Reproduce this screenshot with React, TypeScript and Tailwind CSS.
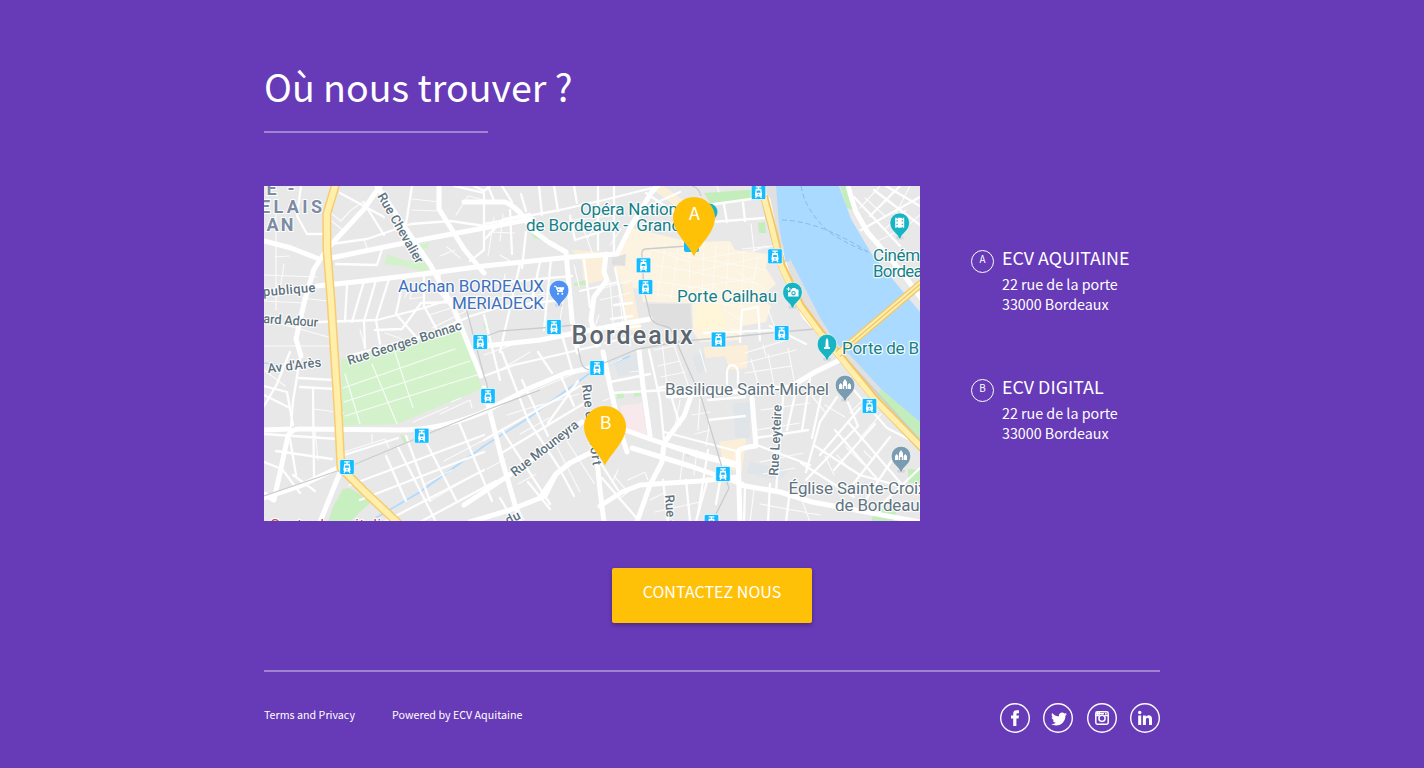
import React from "react";
import { FaTwitter } from "react-icons/fa";

const majorRoads = [
  "M380 186L364 209L327 249L314 269L304 303L296 339L301 356",
  "M264 241L291 248L319 259",
  "M331 258L404 243L484 228L532 219",
  "M317 286L364 281L431 273L484 266L571 257L617 254L631 226L651 193L657 186",
  "M377 186L431 266L454 309L481 376",
  "M439 186V209L464 249L484 273",
  "M264 494L274 500L288 436Q291 429 300 429L400 430Q440 430 484 412L530 388L566 373L596 367",
  "M264 498L300 486L344 465",
  "M341 470L320 522",
  "M264 430L290 429",
  "M464 202L505 202Q520 208 532 230L550 243L566 252L572 320L578 352",
  "M484 388L502 460L520 522",
  "M464 505L520 468L582 422",
  "M540 498L556 474L570 463L606 445",
  "M625 430L650 439L700 456L736 465",
  "M740 485L780 492L812 502L920 522",
  "M603 352L610 386L620 430L627 452",
  "M470 522L510 510L545 496L556 474L570 463",
  "M597 460L600 490L604 522",
  "M600 506L622 492L640 485L700 481L738 477",
  "M740 522L738 452Q738 448 756 446L752 398",
  "M668 396L720 393L790 387L815 372L840 360",
  "M637 522L650 485L662 462L664 443L684 416L691 396",
  "M606 254L604 272L607 280L594 297L591 320L597 345",
  "M484 346L540 340L591 330L650 319",
  "M639 350L643 386L650 436",
  "M762 192L768 200L776 238L790 282L804 316L830 346",
  "M632 448L690 466L742 484",
];

const mediumRoads = [
  "M301 186L297 216L307 234L324 234",
  "M331 244L367 239L411 224L451 221L484 226",
  "M336 264L377 265L383 246",
  "M319 322L377 320L424 308L451 299",
  "M347 356L424 336L471 316L500 307L560 300",
  "M474 186L484 191L490 186",
  "M454 186L484 193L484 250L470 261",
  "M412 186L406 224",
  "M340 193L384 217",
  "M364 203L384 235",
  "M347 285L345 321",
  "M364 281L352 322",
  "M376 280L364 321L365 348",
  "M389 279L376 320L380 344",
  "M404 277L396 314L418 339",
  "M424 274L424 306L436 328",
  "M440 272L438 290L454 310",
  "M375 330L402 329L421 303L454 302",
  "M264 386L287 392L293 425",
  "M301 352L293 401L291 427",
  "M290 352L276 386L264 406",
  "M299 378L334 380M300 387L336 389",
  "M264 395L290 408M264 434L338 439M276 451L332 459M290 439L296 475M313 388L314 477",
  "M264 462L282 469L300 493M293 475L315 491",
  "M344 455L398 438M386 456L406 501M406 436L430 501M398 447L436 522M425 440L456 500M458 420L492 501",
  "M350 485L484 435M360 500L484 452M384 522L484 470M420 522L496 481",
  "M502 352L528 420L558 466L574 496",
  "M484 376L514 365L600 345",
  "M538 352L552 373M522 380L548 436M560 374L574 406",
  "M484 440L580 386M500 454L588 401M520 466L578 426M548 423L578 381",
  "M502 430L550 504M528 482L550 509M500 498L514 522",
  "M484 240L504 219L530 214M510 210L512 254M526 232L522 268",
  "M484 284L572 276M540 262L532 300M551 259L544 330M520 264L500 352M484 315L500 380",
  "M560 328L572 370M584 260L590 307M580 291L618 282",
  "M598 250L598 186M614 253L614 186M570 216L575 240L606 230",
  "M632 228L652 190M636 212L680 192M646 193L674 212",
  "M484 224L560 210L604 200L660 186",
  "M488 186L495 203M502 186L512 202M521 194L526 211M539 186L542 215M554 186L558 211M574 186L577 203",
  "M614 305L632 303M611 319L632 316M609 330L640 326M605 343L638 335",
  "M615 268L622 300L630 345",
  "M610 382L650 374M611 393L668 390",
  "M649 350L660 400L664 440M658 388L668 386L680 425",
  "M708 400L745 397M708 420L745 416M756 438L808 430M754 444L810 465",
  "M708 450L698 514M724 458L716 504M745 487L744 522M770 484L768 522M790 490L786 522",
  "M784 386L776 492M798 382L787 430M810 379L802 431M822 392L812 438M837 397L820 422L806 472",
  "M840 384L858 426L806 480M852 388L887 428L920 445",
  "M848 422L910 494M835 430L878 480M815 446L860 475L920 492M801 463L854 497",
  "M860 408L820 455M875 424L834 470M890 437L850 488M898 451L867 498M920 468L880 506",
  "M727 384V372Q728 365 732 365Q737 365 738 372V386",
  "M740 342L742 310L758 307L760 340M704 333L780 330M770 326L806 344",
  "M708 205L758 198M711 222L764 218M724 205L727 222M743 203L745 221",
  "M854 197L900 246M861 230L920 197M874 190L920 225M886 186L920 206M900 186L870 216",
  "M663 480L668 522M686 480L690 521M708 478L696 521",
  "M602 478L640 522M600 462L618 490",
  "M662 442L735 462M664 432L740 452",
];

const quayRoad = "M848 186L852 200L856 212L868 233L890 258L903 274L924 302";

const smallRoads = [
  "M276 202L276 310M284 264L280 290M275 257L289 256M264 275L317 277M264 301L306 303M265 346L332 346M274 322L332 338M302 298L328 301",
  "M328 211L341 221L350 211L364 201M328 218L345 232M347 226L368 207M364 240L368 250",
  "M440 256L455 250M447 247L460 258M412 210L438 211M412 199L440 202M456 215L468 196L484 200",
  "M360 330L365 348M385 333L402 339M405 297L410 287M412 290L410 299L424 297M429 315L455 307M432 328L468 310",
  "M343 388L455 349M345 416L480 374M344 402L470 361M395 352L413 408M372 364L397 424M345 374L360 424",
  "M314 409L344 413M315 430L318 460M372 434L372 442M344 452L385 439L389 448M413 422L448 407M440 414L470 400L472 408M451 402L461 398M264 370L285 386",
  "M444 461L484 440M425 484L452 470M430 501L460 483",
  "M500 370L530 352M484 355L520 342M526 394L578 372M535 407L579 394",
  "M507 415L543 404M520 434L549 418M487 469L505 459M508 487L524 520M557 447L580 492M567 441L594 483M518 484L536 474",
  "M489 232L515 233M488 256L494 217M503 214L500 241M500 255L515 264M484 299L570 292M505 274L502 304M565 290L560 320",
  "M574 265L579 286M582 225L593 255M572 220L610 216M602 210L588 238M621 229L610 245",
  "M604 288L632 280M610 281L614 336M617 274L623 326M600 300L630 293",
  "M599 315L590 340M595 371L622 359M603 401L615 396M630 372L640 371",
  "M614 476L628 492L619 499M628 480L645 472L648 480M618 470L612 483M650 500L664 493M655 512L700 502",
  "M680 400L675 426M700 398L698 430M692 415L710 412M695 434L710 430M697 450L694 475M710 420L706 446M684 450L680 480",
  "M757 430L800 423M761 410L810 403M760 462L803 453M763 474L795 468M754 490L750 522M760 504L820 515M799 492L810 522",
  "M812 396L825 412M845 417L825 405M865 398L850 413M881 414L860 438M825 456L834 475M837 455L850 470M846 447L863 464M864 451L873 460",
  "M763 345L766 356M745 353L790 339M740 364L796 350M745 373L792 366M751 359L760 390M768 354L775 390M788 348L794 380M768 310L776 330",
  "M880 186L860 208M865 198L885 216M885 229L906 210M878 241L900 230M910 186L896 213M920 215L900 232",
  "M717 186L719 192M751 224L754 250M765 246L752 252M742 249L773 246",
  "M654 350L674 346M658 366L680 361M661 377L685 372M662 342L667 386M672 340L690 390M700 350L706 372",
];

const oldTown = [
  "M653 242L645 270M666 242L657 297M679 244L671 299M690 240L689 300M704 240L702 300M716 245L712 300M729 244L725 313M744 251L741 307M758 257L750 300",
  "M650 250L765 270M655 265L760 284M645 280L756 296M650 293L744 307M728 312L745 322M730 328L744 334",
  "M698 271L762 257M688 288L755 278M705 258L770 247M668 255L690 262M735 270L765 290M712 286L738 300",
];

const trams: [number, number][] = [
  [758.5, 192], [775, 256.3], [643.5, 265.3], [645.5, 287], [554, 327], [480.3, 342], [597, 368], [718.5, 339.5],
  [781.7, 333], [869.5, 406], [488, 396], [421.7, 435.7], [347, 467], [723, 474], [711.5, 522],
];

function Tram({ x, y }: { x: number; y: number }) {
  return (
    <g transform={`translate(${x} ${y})`}>
      <rect x="-7.3" y="-7.5" width="14.6" height="15" rx="1.5" fill="#14bcff" stroke="#fff" strokeWidth=".7" />
      <path d="M-2.8 -5.2H2.8M0 -5V-2.8M-3 5.8L-1.8 3.8M3 5.8L1.8 3.8" stroke="#fff" strokeWidth="1.3" fill="none" />
      <path fillRule="evenodd" d="M-2.8 -3.2H2.8L3.6 3Q3.5 4.4 2 4.4H-2Q-3.5 4.4 -3.6 3ZM-1.7 -1.4L-2 .8H2L1.7 -1.4ZM-.8 2.3V3.3H.8V2.3Z" fill="#fff" />
    </g>
  );
}

function Pin({ x, y, color, children }: { x: number; y: number; color: string; children: React.ReactNode }) {
  return (
    <g transform={`translate(${x} ${y})`}>
      <ellipse cx="0" cy="15" rx="4" ry="2" fill="#000" opacity=".08" />
      <path d="M-1.2 16C-1.2 10.5 -9.8 9 -9.8 0A9.8 9.8 0 0 1 9.8 0C9.8 9 1.2 10.5 1.2 16Z" fill={color} stroke="#fff" strokeWidth=".6" />
      {children}
    </g>
  );
}

function Church() {
  return <path d="M-6 4V0L-4.3 -2L-2.6 0V4ZM-2 4V-3L0 -6L2 -3V4H.8V1H-.8V4ZM2.6 4V0L4.3 -2L6 0V4Z" fill="#fff" />;
}

type LabelProps = { x: number; y: number; w: number; children: string; color?: string; size?: number; bold?: boolean; rotate?: number };

function Label({ x, y, w, children, color = "#5f7380", size = 17, bold, rotate = 0 }: LabelProps) {
  return (
    <text
      x="0"
      y="0"
      transform={`translate(${x} ${y}) rotate(${rotate})`}
      textLength={w}
      fontSize={size}
      fontWeight={bold ? 500 : 400}
      fill={color}
      stroke="#fff"
      strokeOpacity=".85"
      strokeWidth="2.4"
      strokeLinejoin="round"
      paintOrder="stroke"
      xmlSpace="preserve"
    >
      {children}
    </text>
  );
}

function District({ x, y, w, children }: { x: number; y: number; w: number; children: string }) {
  return (
    <text x={x} y={y} fontSize="18" fontWeight="700" fill="#7d8ca5" stroke="#fff" strokeWidth="2" paintOrder="stroke" textLength={w}>
      {children}
    </text>
  );
}

function BigMarker({ x, y, letter }: { x: number; y: number; letter: string }) {
  return (
    <g transform={`translate(${x} ${y})`}>
      <path d="M0 59.5C-5 48 -21 36 -21 20.5A21 20.5 0 0 1 21 20.5C21 36 5 48 0 59.5Z" fill="#ffc107" />
      <text x="0.5" y="23" textAnchor="middle" fontSize="17.86" fill="#fff" className="font-['Noto_Sans_CJK_SC',sans-serif]">
        {letter}
      </text>
    </g>
  );
}

function CityMap() {
  const teal = "#158188";
  return (
    <svg viewBox="264 186 656 335" className="block h-[335px] w-[656px] shrink-0 overflow-hidden font-[Roboto,sans-serif]" role="img">
      <rect x="264" y="186" width="656" height="335" fill="#e8e8e8" />
      <path d="M622 240L632 228L690 242L730 241L735 250L768 254L766 268L776 284L760 298L771 306L766 322L742 326L740 340L700 342L693 332L692 303L643 302L641 290L621 284L615 266Z" fill="#fcf3e0" />
      <path d="M572 250L604 252L603 272L605 280L584 284L582 262ZM622 285L632 283L641 330L628 332ZM704 347L748 345L747 368L730 370L725 356L705 358ZM719 442L746 438L742 472L726 468L722 458ZM652 189L664 186L690 205L684 212Z" fill="#fbefd9" />
      <path d="M697 306L716 300L726 322L722 330L694 328Z" fill="#fff6d8" />
      <path d="M646 304L690 304L692 330L672 332L655 322ZM612 258L626 254L625 266L612 265Z" fill="#dfdfdf" />
      <path d="M341 359L424 340L463 329L482 389L397 424L343 426Z" fill="#d3f2cb" />
      <path d="M387 254L406 261L418 260L432 266L424 272L401 266L384 264ZM415 245L429 243L428 248L417 250Z" fill="#d3f2cb" />
      <path d="M343 489L350 488L371 502L360 512L350 522H328L333 507ZM530 231L540 234L552 240L544 241L534 238ZM400 434L410 440L404 443ZM574 283L586 280L586 285L574 286ZM484 318L488 326L484 329ZM600 325L618 324L619 329L601 331ZM617 394L624 392L624 398L617 399ZM634 391L641 390L641 396L634 397ZM688 450L691 450L689 457L686 456Z" fill="#c7efc0" />
      <path d="M704 193L762 189L762 199L710 203ZM769 198L776 212L783 238L776 235L768 214ZM758 223L765 222L766 233L759 233ZM840 186H847L853 210L847 208ZM908 469L920 470V485L908 482ZM874 512L897 505L894 522H871Z" fill="#c3edbb" />
      <path d="M620 406L642 403L647 438L625 430Z" fill="#f8eaec" />
      <path d="M614 362L636 352L640 372L618 377ZM733 404L750 402L750 438L735 438ZM750 462L790 470L780 480L746 473ZM692 356L704 353L706 370L698 374Z" fill="#dfe5e9" />
      <path d="M760 186H776L784 240L804 284L819 316L840 343L860 365L920 422V446L880 404L840 360L804 322L785 276Z" fill="#e0e0e0" />
      <path d="M881 389L920 422V447L874 402Z" fill="#c3edbb" />
      <path d="M264 363L280 365M374 519L420 492L484 446L530 417L590 373L630 356" stroke="#aedaff" strokeWidth="1.6" fill="none" />

      <g fill="none" stroke="#fff" strokeLinecap="round" strokeLinejoin="round">
        {smallRoads.map((d) => <path key={d} d={d} strokeWidth="1.2" opacity=".8" />)}
        {oldTown.map((d) => <path key={d} d={d} strokeWidth="1" opacity=".55" />)}
        {mediumRoads.map((d) => <path key={d} d={d} strokeWidth="2.3" opacity=".95" />)}
        {majorRoads.map((d) => <path key={d} d={d} strokeWidth="5" />)}
      </g>

      <path d="M776 186L779 225L782 243L804 286L819 316L836 343L850 355L881 389L920 422V312L890 276L871 253L851 219L839 186Z" fill="#aadaff" />
      <path d="M783 242L785 262L790 261L786 240Z" fill="#aadaff" />
      <path d={quayRoad} fill="none" stroke="#fff" strokeWidth="5" />
      <path d="M801 186Q805 210 828 231Q846 244 868 252M782 220Q820 221 868 252" fill="none" stroke="#8ab8ea" strokeWidth="1" strokeDasharray="5 3" />

      <g fill="none" stroke="#c9cccf" strokeWidth="1.3">
        <path d="M264 496L346 468L420 437L484 411L540 390" />
        <path d="M484 337L500 331L554 327L575 325M597 366L638 349L684 341L720 338L782 332L815 329" />
        <path d="M688 246L645 249Q641 250 642 256L644 290L650 316Q652 324 664 326Q672 327 674 336L702 400L724 474L729 488L712 522" />
        <path d="M578 348L581 362Q583 369 590 370M464 300L484 376Q490 388 486 404M692 186Q699 188 701 196" />
        <path d="M764 210L779 265L800 307L840 352L920 440" />
      </g>

      <g fill="none" strokeLinejoin="round">
        <path d="M335.7 184L326.8 214L327 250L331 300L334.5 355L338 409L341 468L364 491L399 524" stroke="#f7cc72" strokeWidth="9" />
        <path d="M335.7 184L326.8 214L327 250L331 300L334.5 355L338 409L341 468L364 491L399 524" stroke="#ffefaa" strokeWidth="6" />
        <path d="M764 196L772 226L782 266L801 306L821 333L841 357L877 401L923 449" stroke="#f4c667" strokeWidth="8" />
        <path d="M763.5 196L771.5 226L781 266L800 306L820 333L840 357L876 401L922 448" stroke="#ffefaa" strokeWidth="5.4" />
        <path d="M838 354L924 281" stroke="#f2c96c" strokeWidth="8" />
        <path d="M838 354L924 281" stroke="#ffefaa" strokeWidth="5.2" />
        <path d="M843 350L924 281" stroke="#ecc66d" strokeWidth="1.3" />
      </g>

      {trams.map(([x, y]) => <Tram key={`${x}-${y}`} x={x} y={y} />)}
      <rect x="684" y="237" width="15" height="15" rx="2" fill="#14bcff" />
      <circle cx="709" cy="212" r="8.5" fill="#18b4c4" />

      <District x={266.5} y={195} w={28}>E -</District>
      <District x={260} y={213} w={62}>ELAIS</District>
      <District x={266.5} y={231} w={27}>AN</District>
      <Label x={377} y={196} w={79} size={13} bold rotate={60}>Rue Chevalier</Label>
      <Label x={256} y={297} w={60} size={13} bold rotate={-5}>épublique</Label>
      <Label x={263} y={323} w={55} size={13} bold rotate={4}>ard Adour</Label>
      <Label x={268} y={373} w={54} size={13} bold rotate={-7}>Av d'Arès</Label>
      <Label x={349} y={365} w={119} size={13} bold rotate={-17.5}>Rue Georges Bonnac</Label>
      <Label x={515} y={477} w={82} size={13} bold rotate={-38}>Rue Mouneyra</Label>
      <Label x={582} y={385} w={42} size={13} bold rotate={83}>Rue du</Label>
      <Label x={589.5} y={442} w={24} size={13} bold rotate={82}>fort</Label>
      <Label x={665} y={495} w={33} size={13} bold rotate={86}>Rue d</Label>
      <Label x={778} y={476} w={71} size={13} bold rotate={-87}>Rue Leyteire</Label>
      <Label x={508} y={525} w={15} size={13} bold rotate={-27}>du</Label>
      <Label x={580} y={214.5} w={107} color={teal}>Opéra Nationa</Label>
      <Label x={526} y={231} w={155} color={teal}>de Bordeaux -  Grand</Label>
      <Label x={398} y={292} w={146} color="#3f70bd">Auchan BORDEAUX</Label>
      <Label x={452} y={308.5} w={92} color="#3f70bd">MERIADECK</Label>
      <Label x={677} y={302} w={100} color={teal}>Porte Cailhau</Label>
      <Label x={842} y={354} w={77} color={teal}>Porte de B</Label>
      <Label x={873} y={261} w={56} color={teal}>Cinéma</Label>
      <Label x={873} y={277} w={66} color={teal}>Bordeaux</Label>
      <Label x={665} y={395} w={164}>Basilique Saint-Michel</Label>
      <Label x={788.5} y={494} w={138}>Église Sainte-Croix</Label>
      <Label x={835} y={511} w={93}>de Bordeaux</Label>
      <Label x={571.5} y={343.5} w={121} size={25} bold color="#5c6670">Bordeaux</Label>
      <Label x={270} y={530} w={125} size={15} color="#b94a4a">Centre hospitalier</Label>

      <Pin x={559} y={290} color="#4e91f3">
        <path d="M-5 -3.7H-3L-1.2 1.6H4M-2 -2.2H5L3.5 .6H-1Z" stroke="#fff" strokeWidth="1" fill="#fff" />
        <circle cx="-1" cy="3.7" r="1" fill="#fff" />
        <circle cx="3.3" cy="3.7" r="1" fill="#fff" />
      </Pin>
      <Pin x={792.5} y={292} color="#18b4c4">
        <path fillRule="evenodd" d="M-1 -2.5L0 -4H3L4 -2.5H6V4.5H-4.5V.3H-2V-2.5ZM1 -1A2.2 2.2 0 1 0 1 3.4A2.2 2.2 0 1 0 1 -1Z" fill="#fff" />
        <circle cx="1" cy="1.2" r="1.1" fill="#fff" />
        <path d="M-4 -5V-1M-6 -3H-2" stroke="#fff" />
      </Pin>
      <Pin x={827} y={344} color="#18b4c4">
        <path d="M0 -6L1.2 -4L1.6 3H3V5H-3V3H-1.6L-1.2 -4Z" fill="#fff" />
      </Pin>
      <Pin x={899.7} y={222.7} color="#18b4c4">
        <path fillRule="evenodd" d="M-4.5 -5H-3V-4H-2V-5H2V-4H3V-5H4.5V5H3V4H2V5H-2V4H-3V5H-4.5ZM-3.3 -2.5V-1.3H-2V-2.5ZM-3.3 1V2.2H-2V1ZM2 -2.5V-1.3H3.3V-2.5ZM2 1V2.2H3.3V1Z" fill="#fff" />
      </Pin>
      <Pin x={845} y={385} color="#7a9cb0"><Church /></Pin>
      <Pin x={901} y={456} color="#7a9cb0"><Church /></Pin>

      <BigMarker x={694} y={197} letter="A" />
      <BigMarker x={605} y={406} letter="B" />
    </svg>
  );
}

function Address({ letter, name }: { letter: string; name: string }) {
  return (
    <div className="flex h-[129px] gap-2">
      <div className="mt-[6px] -ml-px h-[23px] w-[23px] rounded-full border border-white text-center text-[9.8px] leading-4">{letter}</div>
      <div>
        <h2 className="text-[17.86px] leading-[27px] whitespace-nowrap">{name}</h2>
        <p className="mt-[3px] text-[14.29px] leading-5 whitespace-nowrap">22 rue de la porte<br />33000 Bordeaux</p>
      </div>
    </div>
  );
}

const socials = [
  {
    name: "Facebook",
    gap: "mr-[13px]",
    icon: <path d="M13.2 23V15.6H11V12.4H13.2V10.6Q13.2 7.2 16.6 7.2H19V10.3H17.6Q16.4 10.3 16.4 11.4V12.4H19L18.6 15.6H16.4V23Z" fill="#fff" />,
  },
  { name: "Twitter", gap: "mr-[14px]", icon: <FaTwitter x="8" y="8" width="14" height="14" color="#fff" /> },
  {
    name: "Instagram",
    gap: "mr-[13px]",
    icon: (
      <g fill="none" stroke="#fff" transform="translate(8 8)">
        <rect x=".8" y=".8" width="12.4" height="12.4" rx="1.6" strokeWidth="1.5" />
        <path d="M1 4.7H4.3M9.7 4.7H13M2.6 1V4M4.2 1V4M1 2.6H9" strokeWidth="1.2" />
        <circle cx="7" cy="7.3" r="3.1" strokeWidth="1.5" />
        <rect x="10" y="2" width="1.6" height="1.6" fill="#fff" stroke="none" />
      </g>
    ),
  },
  {
    name: "LinkedIn",
    gap: "",
    icon: (
      <g fill="#fff">
        <circle cx="9.7" cy="9.5" r="1.7" />
        <path d="M8.2 12.4H11.2V22H8.2ZM12.9 12.4H15.8V13.7Q16.7 12.2 18.7 12.2Q22 12.2 22 16V22H19V16.7Q19 14.7 17.5 14.7Q15.9 14.7 15.9 16.7V22H12.9Z" />
      </g>
    ),
  },
];

export default function App() {
  return (
    <div className="h-[768px] overflow-hidden bg-[#673ab7] font-['Noto_Sans_CJK_SC',sans-serif] text-white">
      <div className="mx-auto flex w-[896px] flex-col pt-14">
        <h1 className="text-[37.6px] leading-[60px]">Où nous trouver ?</h1>
        <div className="mt-[15px] h-[2px] w-[224px] bg-[#a184d1]" />
        <main className="mt-[53px] flex">
          <CityMap />
          <div className="ml-[52px] pt-[58px]">
            <Address letter="A" name="ECV AQUITAINE" />
            <Address letter="B" name="ECV DIGITAL" />
          </div>
        </main>
        <button className="mt-[47px] h-[55px] w-[200px] self-center rounded-[2px] bg-[#ffc107] pb-2 text-[16.07px] leading-[45px] shadow-[0_2px_4px_rgba(0,0,0,0.3)]">CONTACTEZ NOUS</button>
        <footer className="mt-[47px] flex justify-between border-t-2 border-[#a184d1] pt-[31px]">
          <nav className="flex pt-1 text-[10.71px] leading-4">
            <a className="w-32">Terms and Privacy</a>
            <a>Powered by ECV Aquitaine</a>
          </nav>
          <div className="flex">
            {socials.map((s) => (
              <a key={s.name} aria-label={s.name} className={s.gap}>
                <svg viewBox="0 0 30 30" className="block h-[30px] w-[30px]">
                  <circle cx="15" cy="15" r="14.3" fill="none" stroke="#fff" strokeWidth="1.4" />
                  {s.icon}
                </svg>
              </a>
            ))}
          </div>
        </footer>
      </div>
    </div>
  );
}
